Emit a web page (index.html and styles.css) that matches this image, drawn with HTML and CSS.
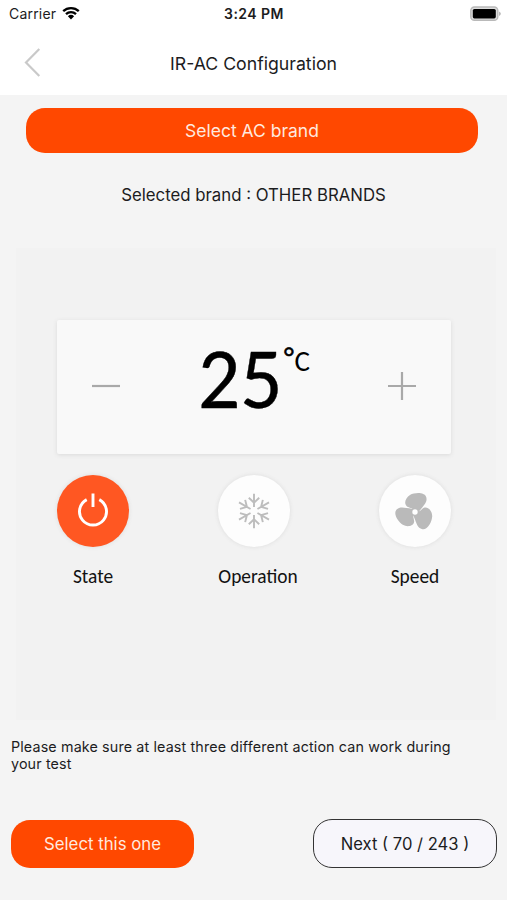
FILE: index.html
```html
<!DOCTYPE html>
<html lang="en">
<head>
<meta charset="utf-8">
<title>IR-AC Configuration</title>
<link rel="stylesheet" href="styles.css">
</head>
<body>
<header class="top">
  <div class="status">
    <div class="carrier"><span>Carrier</span>
      <svg class="wifi" viewBox="0 0 18 14" width="18" height="14"><path d="M1.2 5.2a11.2 11.2 0 0 1 15.6 0M4 8.2a7.2 7.2 0 0 1 10 0" fill="none" stroke="#000" stroke-width="2.3"/><path d="M5.9 10.3a4.5 4.5 0 0 1 6.2 0L9 13.5z"/></svg>
    </div>
    <div class="time">3:24 PM</div>
    <svg class="battery" viewBox="0 0 32 16" width="32" height="16"><rect x=".8" y="1" width="27" height="13.3" rx="3.6" fill="#ddd" stroke="#b9b9b9" stroke-width="1.4"/><rect x="2.8" y="3" width="23" height="9.4" rx="1.6"/><path d="M29.2 5.4q3 2.2 0 4.6z" fill="#aaa"/></svg>
  </div>
  <div class="nav">
    <svg class="back" viewBox="0 0 17 29" width="17" height="29"><path d="M15.3 1L2 14.5 15.3 28" fill="none" stroke="#c9c9c9" stroke-width="2.2"/></svg>
    <h1>IR-AC Configuration</h1>
    <span></span>
  </div>
</header>
<main>
  <button class="btn brand"><span>Select AC brand</span></button>
  <p class="selected"><span>Selected brand : OTHER BRANDS</span></p>
  <section class="remote">
    <div class="display">
      <svg viewBox="0 0 28 28" width="28" height="28"><path d="M0 14H28" stroke="#a9a9a9" stroke-width="2.2"/></svg>
      <div class="temp"><span class="value">25</span><span class="deg">°</span><span class="unit">C</span></div>
      <svg viewBox="0 0 28 28" width="28" height="28"><path d="M0 14H28M14 0V28" stroke="#a9a9a9" stroke-width="2.2"/></svg>
    </div>
    <div class="controls">
      <div class="control">
        <div class="disc on"><svg viewBox="-36 -36 72 72" width="72" height="72"><path d="M-6.3-11.4A13.5 13.5 0 1 0 6.3-11.4M0-17.5V-4" fill="none" stroke="#fff" stroke-width="2.9"/></svg></div>
        <span class="label state">State</span>
      </div>
      <div class="control">
        <div class="disc"><svg viewBox="-36 -36 72 72" width="72" height="72"><defs><path id="arm" d="M0-17.3V-4M-5.2-13.2L0-8.2 5.2-13.2" fill="none" stroke="#bdbdbd" stroke-width="1.9"/></defs><use href="#arm"/><use href="#arm" transform="rotate(60)"/><use href="#arm" transform="rotate(120)"/><use href="#arm" transform="rotate(180)"/><use href="#arm" transform="rotate(240)"/><use href="#arm" transform="rotate(300)"/></svg></div>
        <span class="label operation">Operation</span>
      </div>
      <div class="control">
        <div class="disc"><svg viewBox="-36 -36 72 72" width="72" height="72"><defs><path id="blade" d="M-2-2.4C-3-4.6-5.5-4-8-5.6C-11.6-8.4-9.4-14.4-5-17C0-19.6 9.4-20 11.2-15C12.8-10 9-7 4.4-1z" fill="#bababa"/></defs><g transform="translate(0 1)"><use href="#blade"/><use href="#blade" transform="rotate(120)"/><use href="#blade" transform="rotate(240)"/><circle r="4" fill="#bababa"/><circle r="2.7" fill="#fff"/></g></svg></div>
        <span class="label speed">Speed</span>
      </div>
    </div>
  </section>
  <p class="hint">Please make sure at least three different action can work during<br>your test</p>
  <div class="actions">
    <button class="btn small"><span>Select this one</span></button>
    <button class="btn small next"><span>Next ( 70 / 243 )</span></button>
  </div>
</main>
</body>
</html>
```
FILE: styles.css
```css
* { box-sizing: border-box; }
body { margin: 0; width: 507px; height: 900px; overflow: hidden; background: #f4f4f4; color: #1c1c1e; font-family: Inter, "Liberation Sans", sans-serif; }
h1, p { margin: 0; font-weight: 400; }
.top { height: 95px; background: #fff; }
.status { height: 27px; display: grid; grid-template-columns: 1fr auto 1fr; align-items: center; padding: 0 5px 0 9px; font-size: 14px; }
.carrier { display: flex; align-items: center; gap: 6px; letter-spacing: .2px; }
.wifi { display: block; margin-top: -2px; }
.time { font-weight: 600; letter-spacing: .45px; margin-right: 3px; }
.battery { justify-self: end; }
.nav { height: 68px; display: grid; grid-template-columns: 17px 1fr 17px; align-items: center; padding: 4px 24px 0; }
.back { margin-top: -2px; }
h1 { font-size: 17.7px; line-height: 24px; text-align: center; }
.nav h1 { margin-top: 1px; }
.btn { display: flex; align-items: center; justify-content: center; border: 0; padding: 0; font: 17.5px Inter, sans-serif; background: #ff4800; color: #ffe9df; border-radius: 19px; }
.brand { width: 452px; height: 45px; margin: 13px 0 0 26px; }
.selected { margin-top: 30px; height: 24px; line-height: 24px; font-size: 16.8px; text-align: center; }
.remote { margin: 41px 11px 0 16px; height: 472px; background: #f2f2f2; padding: 72px 44px 0 41px; }
.display { width: 394px; height: 134px; padding: 0 35px; display: flex; align-items: center; justify-content: space-between; background: #f9f9f9; border-radius: 2px; box-shadow: 0 1px 4px #dadada; }
.display > svg { margin-top: -2px; }
.temp { display: flex; width: 112px; height: 80px; margin-top: -10px; color: #000; font-family: Carlito, Lato, sans-serif; }
.value { width: 86px; font-size: 86px; line-height: 74px; transform: scaleX(.97); transform-origin: left; -webkit-text-stroke: .4px #000; }
.deg { font-size: 29px; line-height: 31px; width: 12px; -webkit-text-stroke: .5px #000; }
.unit { font-size: 29px; line-height: 38px; }
.controls { display: flex; justify-content: space-between; width: 394px; margin-top: 21px; }
.control { width: 72px; display: flex; flex-direction: column; align-items: center; }
.disc { width: 72px; height: 72px; border-radius: 50%; background: #fdfdfd; box-shadow: 0 0 4px #dcdcdc; }
.disc svg { display: block; }
.on { background: #ff5722; }
.label { margin-top: 18px; line-height: 24px; font-family: Carlito, Lato, sans-serif; font-size: 19.4px; color: #111; white-space: nowrap; }
.operation { margin-left: 8px; }
.hint { margin: 18px 0 0 11px; font-size: 14.3px; line-height: 17px; letter-spacing: .14px; }
.actions { display: flex; justify-content: space-between; margin: 48px 10px 0 11px; }
.small { width: 183px; height: 48px; font-size: 16.8px; }
.next { width: 184px; height: 49px; margin-top: -1px; font-size: 16.6px; background: #f7f6fb; border: 1.5px solid #333; color: #1c1c1e; }
```
